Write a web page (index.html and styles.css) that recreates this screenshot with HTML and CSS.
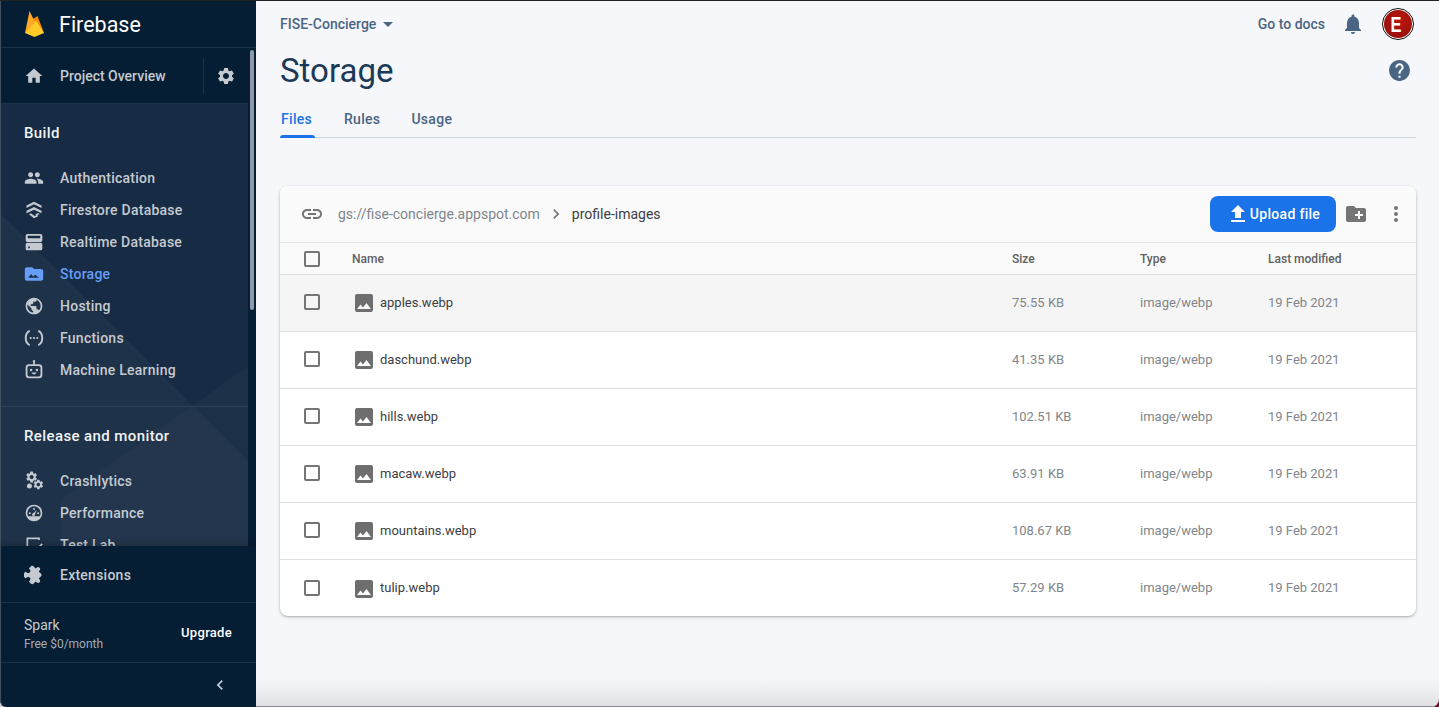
FILE: index.html
```html
<!DOCTYPE html>
<html lang="en">
<head>
<meta charset="utf-8">
<title>Storage - Firebase</title>
<link rel="stylesheet" href="styles.css">
</head>
<body>
<div class="app">
  <aside class="sidebar">
    <div class="brand">
      <svg class="flame" viewBox="0 0 20 26"><path fill="#f58b00" d="M0 22 8 8 12.500 5 19 22z"/><path fill="#ffa726" d="M0 22 4.500 0 8 7 10 10.500z"/><path fill="#ffca28" d="M0 22 11 9.500 19 22 9.500 26z"/></svg>
      <span class="brand-name">Firebase</span>
    </div>
    <div class="overview">
      <svg class="icon" viewBox="0 0 24 24"><path d="M10 20v-6h4v6h5v-8h3L12 3 2 12h3v8z"/></svg>
      <span class="overview-label">Project Overview</span>
      <span class="overview-gear">
        <svg class="icon" viewBox="0 0 24 24"><path id="gear" d="M19.140 12.940c.04-.3.06-.61.06-.94 0-.32-.02-.64-.07-.94l2.030-1.580c.18-.14.23-.41.12-.61l-1.920-3.320c-.12-.22-.37-.29-.59-.22l-2.390.96c-.5-.38-1.030-.7-1.620-.94l-.36-2.540c-.04-.24-.24-.41-.48-.41h-3.840c-.24 0-.43.17-.47.41l-.36 2.540c-.59.24-1.130.57-1.620.94l-2.390-.96c-.22-.08-.47 0-.59.22L2.740 8.870c-.12.21-.08.47.12.61l2.030 1.580c-.05.3-.09.63-.09.94s.02.64.07.94l-2.030 1.580c-.18.14-.23.41-.12.61l1.920 3.320c.12.22.37.29.59.22l2.390-.96c.5.38 1.030.7 1.620.94l.36 2.540c.05.24.24.41.48.41h3.840c.24 0 .44-.17.47-.41l.36-2.540c.59-.24 1.130-.56 1.620-.94l2.390.96c.22.08.47 0 .59-.22l1.920-3.320c.12-.22.07-.47-.12-.61l-2.010-1.580zM12 15.600c-1.980 0-3.600-1.620-3.600-3.600s1.620-3.600 3.600-3.600 3.600 1.620 3.600 3.600-1.620 3.600-3.600 3.600z"/></svg>
      </span>
    </div>
    <div class="nav-wrap">
      <svg class="nav-art" viewBox="0 0 247 442" preserveAspectRatio="none"><path fill="#fff" fill-opacity=".03" d="M0 110 247 357V442H0z"/><path fill="#fff" fill-opacity=".025" d="M247 262 60 396V442H247z"/></svg>
      <nav class="nav">
        <section class="group">
          <h2 class="group-title">Build</h2>
          <a class="item"><svg class="icon" viewBox="0 0 24 24"><path d="M16 11c1.660 0 2.990-1.340 2.990-3S17.660 5 16 5c-1.660 0-3 1.340-3 3s1.340 3 3 3zm-8 0c1.660 0 2.990-1.340 2.990-3S9.660 5 8 5C6.340 5 5 6.340 5 8s1.340 3 3 3zm0 2c-2.330 0-7 1.170-7 3.500V19h14v-2.500c0-2.330-4.670-3.500-7-3.500zm8 0c-.29 0-.62.02-.97.05 1.160.84 1.970 1.970 1.970 3.450V19h6v-2.500c0-2.330-4.670-3.500-7-3.500z"/></svg>Authentication</a>
          <a class="item"><svg class="icon" viewBox="0 0 24 24"><path d="M12 2 3 6.600v3L12 5.200l9 4.400v-3zM12 8.400 3 13v3l9-4.400 9 4.400v-3zM6 17.200l6 4.800 5-2.400-1-1.800 3-.6-2-1.600-3.200 1.600.6 1.400-1.400.6-5-3.400z"/></svg>Firestore Database</a>
          <a class="item"><svg class="icon" viewBox="0 0 24 24"><path fill-rule="evenodd" d="M4 2.500h16a2 2 0 0 1 2 2V10a2 2 0 0 1-2 2H4a2 2 0 0 1-2-2V4.500a2 2 0 0 1 2-2zM4.500 4.500v3h15v-3zM4 13h16a2 2 0 0 1 2 2v5a2 2 0 0 1-2 2H4a2 2 0 0 1-2-2v-5a2 2 0 0 1 2-2zm1 4.500v2h2v-2z"/></svg>Realtime Database</a>
          <a class="item active"><svg class="icon" viewBox="0 0 24 24"><path fill-rule="evenodd" d="M20 6h-8l-2-2H3.500C2.400 4 1 4.900 1 6v12c0 1.100 1.400 2 2.500 2H20.500c1.100 0 2.500-.9 2.500-2V8c0-1.100-1.400-2-3-2zM5 16.500l3.500-4.500 2.500 3 2.500-2 4.500 3.500z"/></svg>Storage</a>
          <a class="item"><svg class="icon" viewBox="0 0 24 24"><path d="M12 2C6.480 2 2 6.480 2 12s4.480 10 10 10 10-4.480 10-10S17.520 2 12 2zm-1 17.930c-3.950-.49-7-3.850-7-7.930 0-.62.08-1.210.21-1.790L9 15v1c0 1.100.9 2 2 2v1.930zm6.900-2.540c-.26-.81-1-1.390-1.900-1.390h-1v-3c0-.55-.45-1-1-1H8v-2h2c.55 0 1-.45 1-1V7h2c1.100 0 2-.9 2-2v-.41c2.930 1.190 5 4.060 5 7.410 0 2.080-.8 3.970-2.100 5.390z"/></svg>Hosting</a>
          <a class="item"><svg class="icon" viewBox="0 0 24 24"><path d="M6.500 2.500C2.500 4 1 8 1 12s1.500 8 5.500 9.500l.8-1.900C4.500 18.300 3.200 15.500 3.200 12S4.500 5.700 7.300 4.400zM17.500 2.500l-.8 1.900c2.800 1.300 4.100 4.100 4.100 7.600s-1.300 6.300-4.100 7.600l.8 1.900c4-1.500 5.500-5.500 5.500-9.500s-1.500-8-5.500-9.500z"/><circle cx="8" cy="12" r="1.300"/><circle cx="12" cy="12" r="1.300"/><circle cx="16" cy="12" r="1.300"/></svg>Functions</a>
          <a class="item"><svg class="icon" viewBox="0 0 24 24"><path fill-rule="evenodd" d="M12 0a1.500 1.500 0 0 1 1 2.600V5h5a4 4 0 0 1 4 4v9a4 4 0 0 1-4 4H6a4 4 0 0 1-4-4V9a4 4 0 0 1 4-4h5V2.600A1.500 1.500 0 0 1 12 0zM6 7.200a2 2 0 0 0-1.800 1.800v9A2 2 0 0 0 6 19.800h12a2 2 0 0 0 1.800-1.800V9A2 2 0 0 0 18 7.200zM8.500 10.500a1.500 1.500 0 1 1 0 3 1.500 1.500 0 0 1 0-3zm7 0a1.500 1.500 0 1 1 0 3 1.500 1.500 0 0 1 0-3zM9 15h6c-.4 1.300-1.600 2.200-3 2.200S9.400 16.300 9 15z"/></svg>Machine Learning</a>
        </section>
        <section class="group second">
          <h2 class="group-title">Release and monitor</h2>
          <a class="item"><svg class="icon" viewBox="0 0 24 24"><use href="#gear" transform="translate(1 -1) scale(.68)"/><use href="#gear" transform="translate(10 9) scale(.6)"/><circle cx="6.500" cy="18" r="3"/></svg>Crashlytics</a>
          <a class="item"><svg class="icon" viewBox="0 0 24 24"><path fill-rule="evenodd" d="M12 2a10 10 0 1 1 0 20 10 10 0 0 1 0-20zm0 2a8 8 0 0 0-8 8c0 1.500.4 2.900 1.100 4h13.800c.7-1.100 1.100-2.500 1.100-4a8 8 0 0 0-8-8zm-5 7a1.200 1.200 0 1 1 0 2.400A1.200 1.200 0 0 1 7 11zm10 0a1.200 1.200 0 1 1 0 2.400 1.200 1.200 0 0 1 0-2.400zM12 6a1.200 1.200 0 1 1 0 2.400A1.200 1.200 0 0 1 12 6zm3.500 2.500L13 13.500a1.700 1.700 0 1 1-2-1.200z"/></svg>Performance</a>
          <a class="item"><svg class="icon" viewBox="0 0 24 24"><path d="M3 3h16v3h-2V5H5v14h4v2H3zM21 10l1.500 1.500L13 21l-5-5 1.500-1.500 3.500 3.500z"/></svg>Test Lab</a>
        </section>
      </nav>
    </div>
    <div class="extensions">
      <svg class="icon" viewBox="0 0 24 24"><path transform="rotate(45 12 12)" d="M20.500 11H19V7c0-1.100-.9-2-2-2h-4V3.500C13 2.120 11.880 1 10.500 1S8 2.120 8 3.500V5H4c-1.100 0-1.990.9-1.990 2v3.800H3.500c1.490 0 2.700 1.210 2.700 2.700s-1.210 2.700-2.700 2.700H2V20c0 1.100.9 2 2 2h3.800v-1.500c0-1.490 1.210-2.700 2.700-2.700 1.490 0 2.700 1.210 2.700 2.700V22H17c1.100 0 2-.9 2-2v-4h1.500c1.380 0 2.500-1.120 2.500-2.500S21.880 11 20.500 11z"/></svg>
      <span>Extensions</span>
    </div>
    <div class="plan">
      <div class="plan-info">
        <div class="plan-name">Spark</div>
        <div class="plan-price">Free $0/month</div>
      </div>
      <span class="upgrade">Upgrade</span>
    </div>
    <div class="collapse">
      <svg class="icon" viewBox="0 0 24 24"><path d="M15.410 7.410 14 6l-6 6 6 6 1.410-1.410L10.830 12z"/></svg>
    </div>
  </aside>

  <main class="main">
    <header class="topbar">
      <div class="project">FISE-Concierge<span class="caret"></span></div>
      <div class="top-actions">
        <span class="docs">Go to docs</span>
        <svg class="bell" viewBox="0 0 24 24"><path d="M12 22c1.100 0 2-.9 2-2h-4c0 1.100.89 2 2 2zm6-6v-5c0-3.070-1.640-5.640-4.500-6.320V4c0-.83-.67-1.500-1.500-1.500s-1.500.67-1.500 1.500v.68C7.630 5.360 6 7.920 6 11v5l-2 2v1h16v-1l-2-2z"/></svg>
        <span class="avatar"><span class="avatar-in"><span class="avatar-e">E</span></span></span>
      </div>
    </header>
    <div class="title-row">
      <h1 class="title">Storage</h1>
      <svg class="help" viewBox="0 0 24 24"><path d="M12 2C6.480 2 2 6.480 2 12s4.480 10 10 10 10-4.480 10-10S17.520 2 12 2zm1 17h-2v-2h2v2zm2.070-7.750l-.9.92C13.450 12.900 13 13.500 13 15h-2v-.5c0-1.100.45-2.100 1.170-2.830l1.240-1.260c.37-.36.59-.86.59-1.410 0-1.100-.9-2-2-2s-2 .9-2 2H8c0-2.210 1.790-4 4-4s4 1.790 4 4c0 .88-.36 1.680-.93 2.250z"/></svg>
    </div>
    <div class="tabs">
      <span class="tab current">Files</span>
      <span class="tab">Rules</span>
      <span class="tab">Usage</span>
    </div>

    <section class="card">
      <div class="toolbar">
        <svg class="link" viewBox="0 0 24 24"><path d="M3.900 12c0-1.710 1.390-3.100 3.100-3.100h4V7H7c-2.760 0-5 2.240-5 5s2.240 5 5 5h4v-1.900H7c-1.710 0-3.100-1.390-3.100-3.100zM8 13h8v-2H8v2zm9-6h-4v1.900h4c1.710 0 3.100 1.390 3.100 3.100s-1.390 3.100-3.100 3.100h-4V17h4c2.760 0 5-2.240 5-5s-2.240-5-5-5z"/></svg>
        <span class="bucket">gs://fise-concierge.appspot.com</span>
        <svg class="crumb" viewBox="0 0 24 24"><path d="M10 6 8.590 7.410 13.170 12l-4.580 4.590L10 18l6-6z"/></svg>
        <span class="folder">profile-images</span>
        <span class="upload"><svg viewBox="0 0 24 24"><path d="M9 16h6v-6h4l-7-7-7 7h4zm-4 2h14v2H5z"/></svg>Upload file</span>
        <svg class="tool-folder" viewBox="0 0 24 24"><path d="M20 6h-8l-2-2H4c-1.110 0-1.990.89-1.990 2L2 18c0 1.110.89 2 2 2h16c1.110 0 2-.89 2-2V8c0-1.110-.89-2-2-2zm-1 8h-3v3h-2v-3h-3v-2h3V9h2v3h3v2z"/></svg>
        <svg class="tool-more" viewBox="0 0 24 24"><path d="M12 8c1.100 0 2-.9 2-2s-.9-2-2-2-2 .9-2 2 .9 2 2 2zm0 2c-1.100 0-2 .9-2 2s.9 2 2 2 2-.9 2-2-.9-2-2-2zm0 6c-1.100 0-2 .9-2 2s.9 2 2 2 2-.9 2-2-.9-2-2-2z"/></svg>
      </div>
      <div class="row head">
        <span class="check"></span><span>Name</span><span>Size</span><span>Type</span><span>Last modified</span>
      </div>
      <div class="row file hover">
        <span class="check"></span><span class="name"><svg viewBox="0 0 24 24"><path d="M21 19V5c0-1.100-.9-2-2-2H5c-1.100 0-2 .9-2 2v14c0 1.100.9 2 2 2h14c1.100 0 2-.9 2-2zM8.500 13.500l2.500 3.010L14.500 12l4.500 6H5l3.500-4.500z"/></svg>apples.webp</span><span>75.55 KB</span><span>image/webp</span><span>19 Feb 2021</span>
      </div>
      <div class="row file">
        <span class="check"></span><span class="name"><svg viewBox="0 0 24 24"><path d="M21 19V5c0-1.100-.9-2-2-2H5c-1.100 0-2 .9-2 2v14c0 1.100.9 2 2 2h14c1.100 0 2-.9 2-2zM8.500 13.500l2.500 3.010L14.500 12l4.500 6H5l3.500-4.500z"/></svg>daschund.webp</span><span>41.35 KB</span><span>image/webp</span><span>19 Feb 2021</span>
      </div>
      <div class="row file">
        <span class="check"></span><span class="name"><svg viewBox="0 0 24 24"><path d="M21 19V5c0-1.100-.9-2-2-2H5c-1.100 0-2 .9-2 2v14c0 1.100.9 2 2 2h14c1.100 0 2-.9 2-2zM8.500 13.500l2.500 3.010L14.500 12l4.500 6H5l3.500-4.500z"/></svg>hills.webp</span><span>102.51 KB</span><span>image/webp</span><span>19 Feb 2021</span>
      </div>
      <div class="row file">
        <span class="check"></span><span class="name"><svg viewBox="0 0 24 24"><path d="M21 19V5c0-1.100-.9-2-2-2H5c-1.100 0-2 .9-2 2v14c0 1.100.9 2 2 2h14c1.100 0 2-.9 2-2zM8.500 13.500l2.500 3.010L14.500 12l4.500 6H5l3.500-4.500z"/></svg>macaw.webp</span><span>63.91 KB</span><span>image/webp</span><span>19 Feb 2021</span>
      </div>
      <div class="row file">
        <span class="check"></span><span class="name"><svg viewBox="0 0 24 24"><path d="M21 19V5c0-1.100-.9-2-2-2H5c-1.100 0-2 .9-2 2v14c0 1.100.9 2 2 2h14c1.100 0 2-.9 2-2zM8.500 13.500l2.500 3.010L14.500 12l4.500 6H5l3.500-4.500z"/></svg>mountains.webp</span><span>108.67 KB</span><span>image/webp</span><span>19 Feb 2021</span>
      </div>
      <div class="row file last">
        <span class="check"></span><span class="name"><svg viewBox="0 0 24 24"><path d="M21 19V5c0-1.100-.9-2-2-2H5c-1.100 0-2 .9-2 2v14c0 1.100.9 2 2 2h14c1.100 0 2-.9 2-2zM8.500 13.500l2.500 3.010L14.500 12l4.500 6H5l3.500-4.500z"/></svg>tulip.webp</span><span>57.29 KB</span><span>image/webp</span><span>19 Feb 2021</span>
      </div>
    </section>
    <div class="bottom-fade"></div>
  </main>
</div>
</body>
</html>
```

FILE: styles.css
```css
* { box-sizing: border-box; }
html, body { margin: 0; height: 100%; overflow: hidden; }
body { font-family: Roboto, "Liberation Sans", sans-serif; background: #f6f7fa; }

.app { display: flex; height: 707px; border-top: 1px solid #222; background: linear-gradient(90deg, #cfd3d8 50%, #7a1030 50%); }

/* sidebar */
.sidebar { width: 256px; flex: none; display: flex; flex-direction: column; background: #051e34; color: #c5cad1; border-left: 1px solid #41505f; border-bottom-left-radius: 6px; position: relative; }
.icon { width: 20px; height: 20px; fill: currentColor; flex: none; }
.brand { height: 47px; display: flex; align-items: center; gap: 14px; padding-left: 24px; border-bottom: 1px solid #1c3249; flex: none; }
.flame { width: 20px; height: 26px; flex: none; margin-top: -1px; }
.brand-name { font-size: 21.500px; color: #fff; }
.overview { height: 56px; flex: none; display: flex; align-items: center; padding-left: 23px; border-bottom: 1px solid #1c3249; background: #051e34; width: 247px; }
.overview-label { font-size: 14px; font-weight: 500; margin-left: 16px; flex: 1; white-space: nowrap; }
.overview-gear { height: 36px; width: 45px; display: flex; align-items: center; justify-content: center; border-left: 1px solid #1c3249; }
.nav-wrap { flex: 1; min-height: 0; position: relative; overflow: hidden; width: 247px; background: #172c44; }
.nav-art { position: absolute; inset: 0; width: 100%; height: 100%; }
.nav { position: relative; }
.group { height: 303px; padding-top: 18px; border-bottom: 1px solid #2f4358; }
.group.second { height: auto; border: 0; }
.group-title { margin: 0 0 18px 23px; font-size: 15px; line-height: 22px; font-weight: 500; color: #f2f4f6; letter-spacing: .4px; }
.item { display: flex; align-items: center; height: 32px; padding-left: 23px; gap: 16px; font-size: 14px; font-weight: 500; letter-spacing: .25px; white-space: nowrap; }
.item.active { color: #669df6; }
.sidebar::after { content: ""; position: absolute; left: 249px; top: 49px; width: 4px; height: 260px; border-radius: 3px; background: #8e9aa9; }
.extensions { height: 57px; flex: none; display: flex; align-items: center; gap: 16px; padding: 2px 0 0 23px; border-bottom: 1px solid #1c3249; font-size: 14px; font-weight: 500; letter-spacing: .25px; box-shadow: 0 -3px 6px rgba(0,0,0,.15); position: relative; }
.plan { height: 60px; flex: none; display: flex; align-items: center; justify-content: space-between; padding: 0 24px 0 23px; border-bottom: 1px solid #1c3249; }
.plan-info { padding-top: 2px; }
.plan-name { font-size: 14px; line-height: 18px; color: #c5cad1; }
.plan-price { font-size: 12px; line-height: 16px; margin-top: 2px; color: #a4acb6; }
.upgrade { font-size: 13px; font-weight: 500; color: #fff; letter-spacing: .3px; }
.collapse { height: 44px; flex: none; display: flex; align-items: center; justify-content: flex-end; padding-right: 26px; }

/* main */
.main { flex: 1; min-width: 0; padding: 0 23px 0 24px; position: relative; background: #f6f7fa; border-bottom-right-radius: 8px; overflow: hidden; }
.topbar { height: 47px; padding-bottom: 1px; display: flex; align-items: center; justify-content: space-between; }
.project { font-size: 14px; font-weight: 500; color: #4a6583; display: flex; align-items: center; }
.caret { margin-left: 7px; width: 0; height: 0; border-left: 5px solid transparent; border-right: 5px solid transparent; border-top: 5px solid #4a6583; }
.top-actions { display: flex; align-items: center; margin-right: 2px; }
.docs { font-size: 14px; font-weight: 500; color: #4a6583; margin-right: 16px; }
.bell { width: 24px; height: 24px; fill: #4a6583; margin-right: 17px; }
.avatar { width: 32px; height: 32px; border-radius: 50%; background: #fff; border: 1px solid #111; padding: 1px; display: block; }
.avatar-in { display: flex; width: 100%; height: 100%; align-items: center; justify-content: center; border-radius: 50%; background: radial-gradient(circle at 60% 40%, #b8160f, #8f0f0c); overflow: hidden; }
.avatar-e { color: #fff; font-family: "Liberation Sans", sans-serif; font-weight: 700; font-size: 22px; line-height: 1; transform: scaleX(.75) translate(-3px, 1px); }
.title-row { height: 45px; display: flex; align-items: center; justify-content: space-between; }
.title { margin: 0; font-size: 33px; font-weight: 400; color: #1b3a57; }
.help { width: 25px; height: 25px; fill: #4a6583; margin-right: 4px; }
.tabs { margin-top: 10px; height: 35px; display: flex; border-bottom: 1px solid #c9d3df; }
.tab { margin-right: 31px; font-size: 14px; font-weight: 500; letter-spacing: .3px; color: #4a6583; line-height: 32px; position: relative; }
.tab.current { color: #1a73e8; padding: 0 1px; margin-right: 29px; width: 35px; text-align: left; }
.tab.current::after { content: ""; position: absolute; left: 0; right: 0; bottom: -1px; height: 3px; background: #1a73e8; border-radius: 3px 3px 0 0; }

/* card */
.card { margin-top: 48px; background: #fff; border-radius: 8px; box-shadow: 0 1px 2px rgba(60,64,67,.3), 0 1px 3px 1px rgba(60,64,67,.1); overflow: hidden; }
.toolbar { height: 57px; display: flex; align-items: center; background: #fafafa; border-bottom: 1px solid #e5e5e5; padding: 0 8px 0 20px; }
.link { width: 24px; height: 24px; fill: #757575; flex: none; }
.bucket { margin-left: 14px; font-size: 14px; color: #80868b; }
.crumb { width: 20px; height: 20px; margin: 0 6px; fill: #757575; }
.folder { font-size: 14px; color: #3c4043; flex: 1; }
.upload { height: 36px; width: 126px; border-radius: 8px; background: #1a73e8; color: #fff; font-size: 14px; font-weight: 500; letter-spacing: .3px; display: flex; align-items: center; justify-content: center; }
.upload svg { width: 24px; height: 24px; fill: #fff; }
.tool-folder { width: 24px; height: 24px; fill: #757575; margin-left: 8px; }
.tool-more { width: 24px; height: 24px; fill: #757575; margin-left: 16px; }
.row { display: grid; grid-template-columns: 72px 660px 128px 128px 1fr; align-items: center; }
.head { height: 32px; background: #fafafa; font-size: 12px; font-weight: 500; color: #616161; border-bottom: 1px solid #e0e0e0; }
.file { height: 57px; padding-bottom: 2px; font-size: 13px; color: #80868b; border-bottom: 1px solid #e0e0e0; }
.file.hover { background: #f5f5f5; }
.file.last { border-bottom: 0; height: 56px; padding-bottom: 1px; }
.check { width: 16px; height: 16px; margin-left: 24px; border: 2px solid #757575; border-radius: 2px; display: block; }
.name { display: flex; align-items: center; color: #3c4043; }
.name svg { width: 24px; height: 24px; margin-top: 2px; fill: #6e6e6e; margin-right: 4px; }
.bottom-fade { position: absolute; left: 0; right: 0; bottom: 0; height: 28px; background: linear-gradient(rgba(0,0,0,0), rgba(0,0,0,.09)); border-bottom: 1px solid #8a8a8a; }
```
